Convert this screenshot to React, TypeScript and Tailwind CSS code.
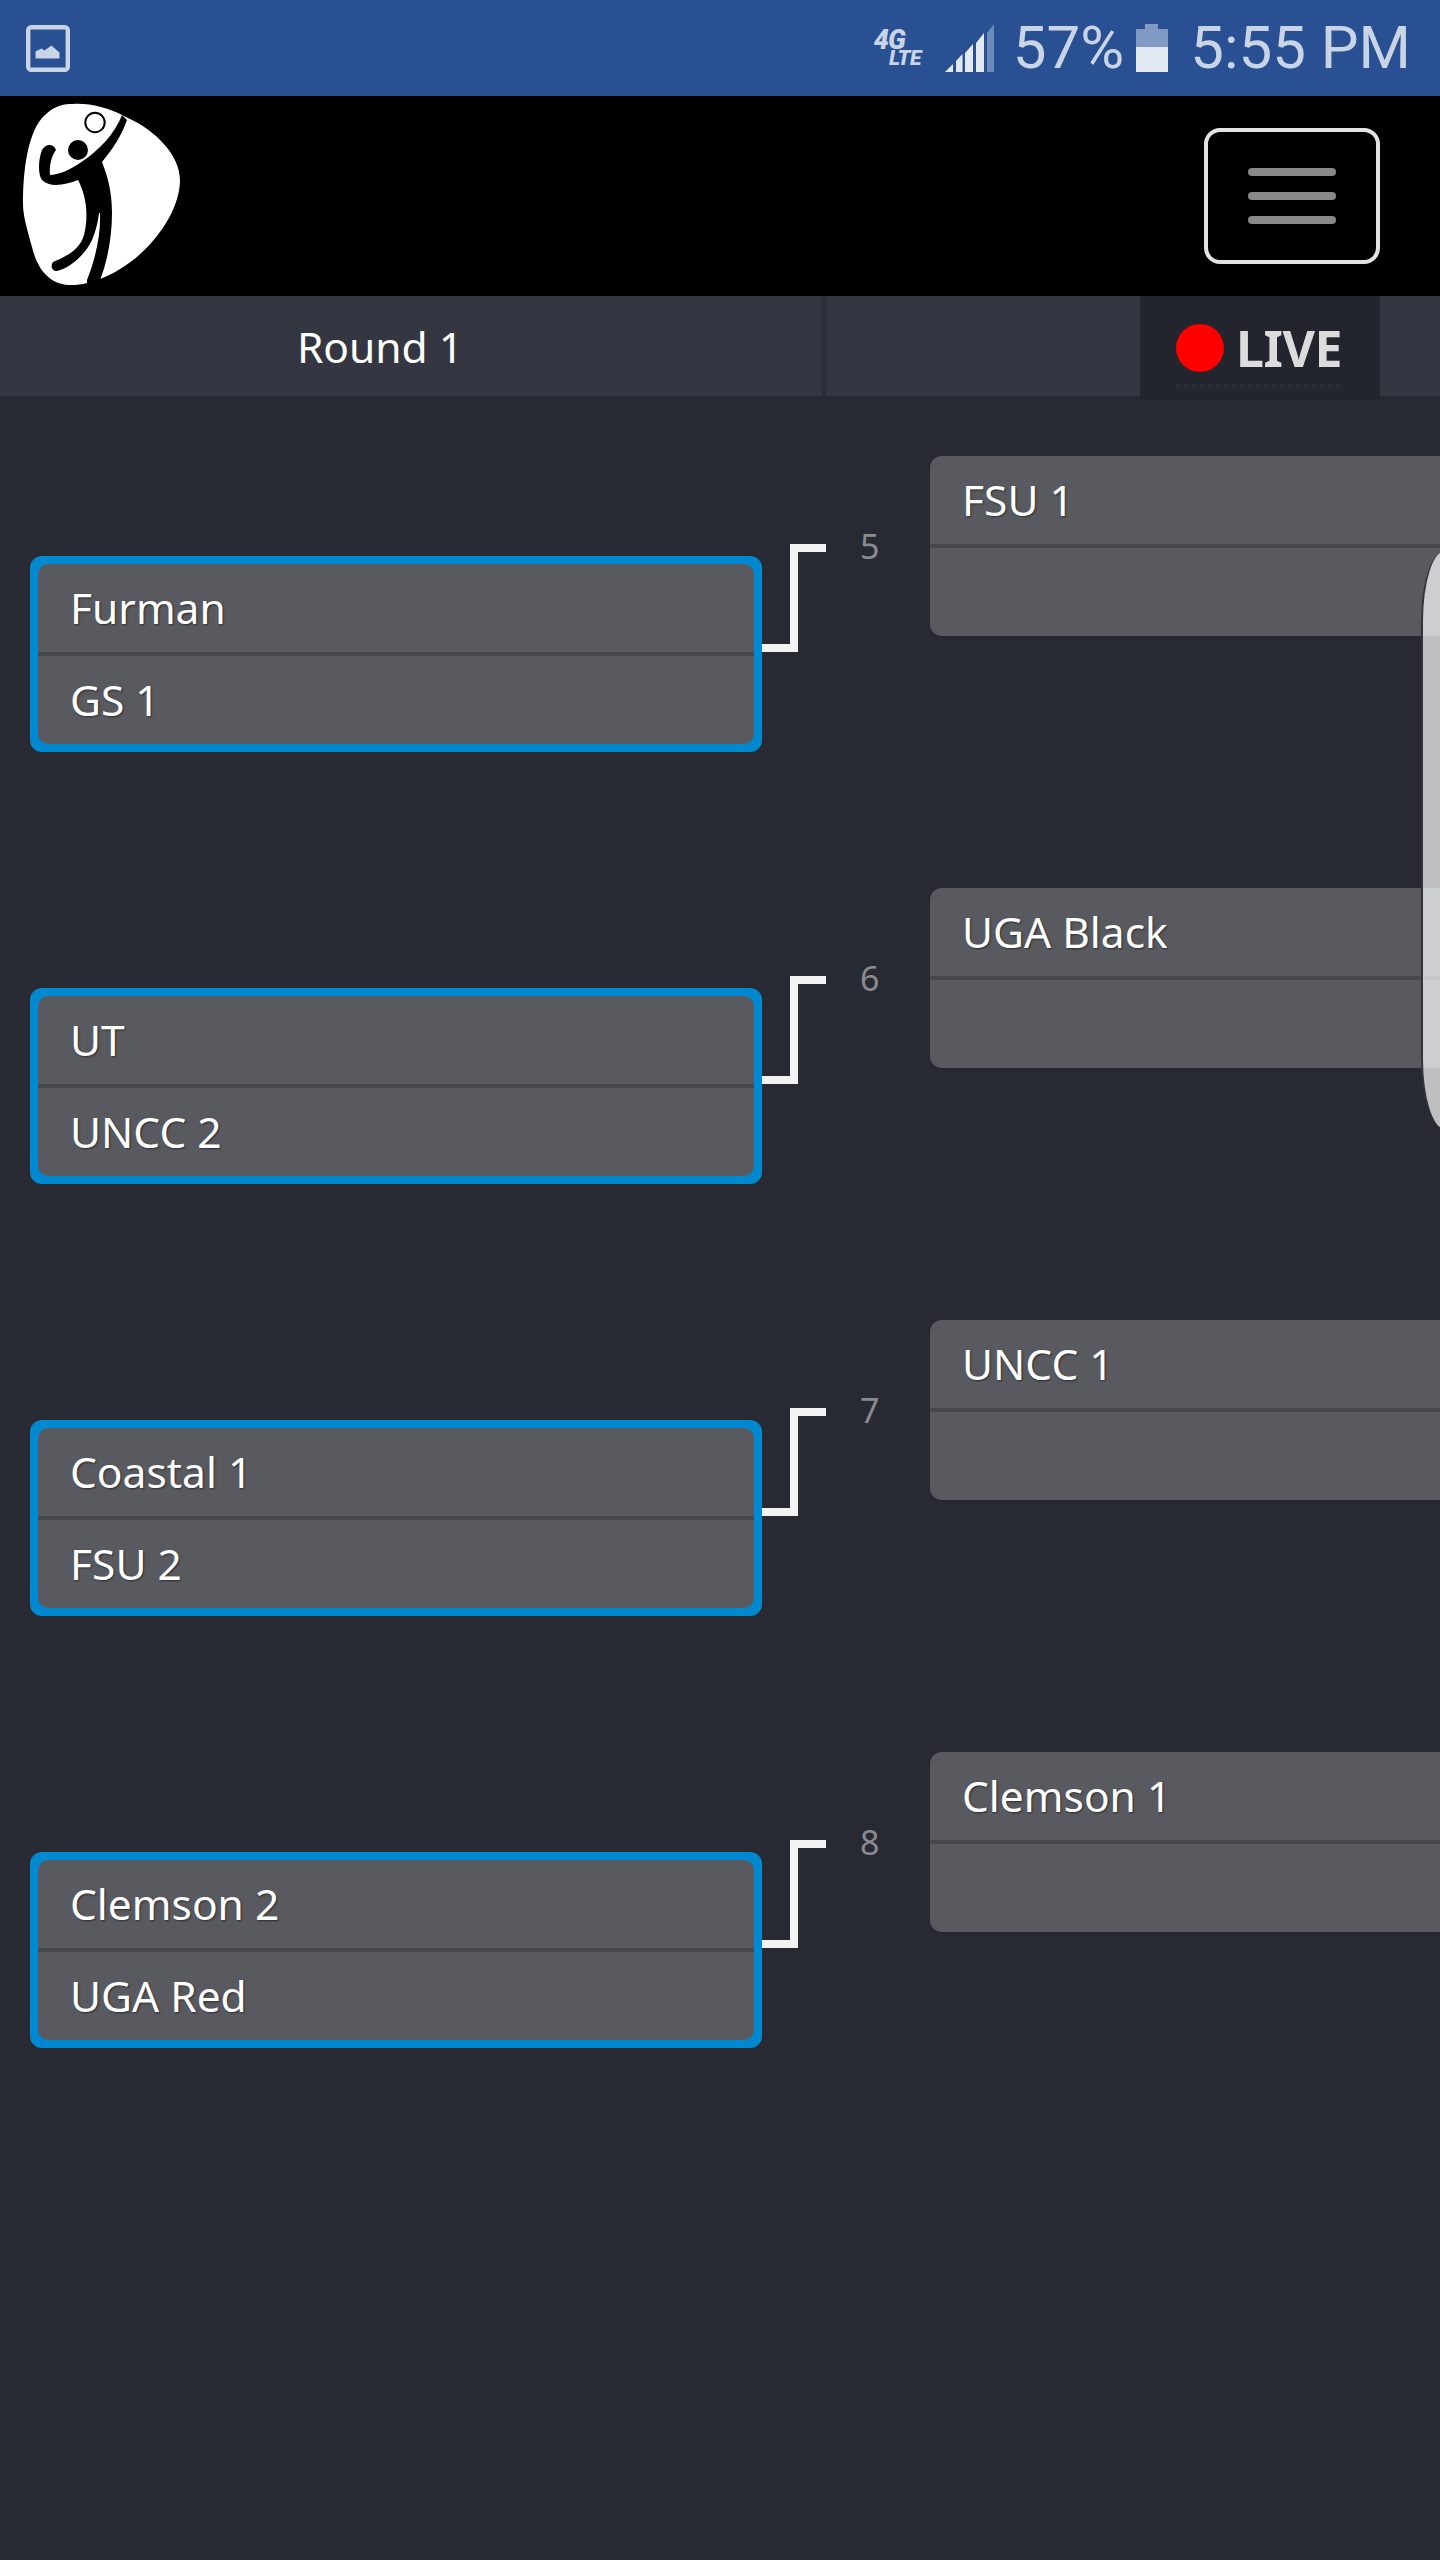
const teams = [
  { n: 5, top: "FSU 1", a: "Furman", b: "GS 1" },
  { n: 6, top: "UGA Black", a: "UT", b: "UNCC 2" },
  { n: 7, top: "UNCC 1", a: "Coastal 1", b: "FSU 2" },
  { n: 8, top: "Clemson 1", a: "Clemson 2", b: "UGA Red" },
];

function Slot({ name }: { name?: string }) {
  return (
    <div className="flex h-[88px] items-center pb-[1px] pl-[32px] text-[42.5px] text-white [text-shadow:1px_1px_2px_rgba(0,0,0,0.5)]">
      {name}
    </div>
  );
}

function Logo() {
  return (
    <svg viewBox="0 96 190 200" className="h-[200px] w-[190px]">
      <path
        d="M73 104 C90 103 108 108 122 115 L128 118 C155 130 180 155 180 180 C180 215 145 262 100 279 L87 283 C60 290 40 280 32 247 C26 225 23 215 23 203 C23 170 28 130 45 115 C55 105 65 104 73 104 Z"
        fill="#fff"
      />
      <path
        d="M122 115 C115 133 100 150 80 163 C70 170 58 175 50 175 C49 165 52 155 56 150 C54 144 46 143 42 150 C38 160 38 175 42 180 C50 188 65 185 78 180 C86 195 89 215 84 235 C80 250 65 257 53 262 C50 266 52 271 57 271 C70 268 85 255 92 240 C97 228 98 220 99 213 L100 213 C101 235 95 260 87 280 L87 285 L100 280 C108 260 112 235 112 213 C112 190 107 175 102 162 C112 150 122 135 127 120 Z"
        fill="#000"
      />
      <circle cx="95" cy="122.5" r="9.7" fill="#fff" stroke="#000" strokeWidth="2" />
      <circle cx="78" cy="150" r="10" fill="#000" />
    </svg>
  );
}

function StatusBar() {
  return (
    <div className="flex h-[96px] items-center justify-between pl-[26px] pr-[29px] bg-[#285092] font-['Roboto',sans-serif] text-[#c9d4e6]">
      <svg viewBox="0 0 44 47" className="h-[47px] w-[44px]">
        <rect x="2.2" y="2.2" width="39.6" height="42.6" rx="3" fill="none" stroke="#c9d4e6" strokeWidth="4.4" />
        <path d="M9.5 33.5 V26.5 L15.5 23.5 L18.5 25.5 L25.5 20.5 L33.5 27.5 V33.5 Z" fill="#c9d4e6" />
      </svg>
      <div className="flex items-center">
        <div className="relative mr-[24px] h-[38px] w-[47px] font-black italic leading-none">
          <span className="absolute left-0 top-[-2px] text-[27px] tracking-[-1px]">4G</span>
          <span className="absolute bottom-[-2px] right-0 text-[21px] tracking-[-0.5px]">LTE</span>
        </div>
        <svg viewBox="0 0 49 48" className="mr-[19px] h-[48px] w-[49px]">
          <path d="M0 48 L8 40 V48 Z" fill="#e3e9f2" />
          <path d="M11 37 L17.5 30 V48 H11 Z" fill="#e3e9f2" />
          <path d="M20 29 L28 20 V48 H20 Z" fill="#e3e9f2" />
          <path d="M31 19 L39 9 V48 H31 Z" fill="#e3e9f2" />
          <path d="M42 9 L49 0 V48 H42 Z" fill="#6b8bbb" />
        </svg>
        <span className="text-[60px] leading-none">57%</span>
        <svg viewBox="0 0 32 48" className="ml-[12px] mr-[22px] h-[48px] w-[32px]">
          <path d="M9 0 H22 V5 H32 V23 H0 V5 H9 Z" fill="#809ac3" />
          <rect y="23" width="32" height="25" fill="#e3e9f2" />
        </svg>
        <span className="text-[60px] leading-none">5:55 PM</span>
      </div>
    </div>
  );
}

function Header() {
  return (
    <div className="flex h-[200px] items-center justify-between bg-black pr-[60px]">
      <Logo />
      <div className="flex h-[136px] w-[176px] flex-col items-center justify-center gap-4 rounded-[16px] border-[4px] border-[#e3e3e3]">
        <div className="h-2 w-[88px] rounded-[4px] bg-[#888888]" />
        <div className="h-2 w-[88px] rounded-[4px] bg-[#888888]" />
        <div className="h-2 w-[88px] rounded-[4px] bg-[#888888]" />
      </div>
    </div>
  );
}

function TabBar() {
  return (
    <div className="flex h-[100px] items-start bg-[#343741]">
      <div className="flex h-[100px] w-[826px] items-center justify-center border-r-[4px] border-[#2b2d38] pr-[62px] pt-[1px] text-[42.5px] text-white">
        Round 1
      </div>
      <div className="w-[314px]" />
      <div className="flex h-[104px] w-[240px] flex-col items-start bg-[#22252d] pl-[36px] pt-[28px]">
        <div className="flex items-center gap-3">
          <div className="h-12 w-12 rounded-full bg-[#ff0000]" />
          <span className="text-[50px] font-bold leading-[48px] tracking-[-0.5px] text-[#dcdcdc]">LIVE</span>
        </div>
        <div className="mt-3 h-1 w-[168px] bg-[repeating-linear-gradient(90deg,#2b2e36_0_4px,transparent_4px_8px)]" />
      </div>
    </div>
  );
}

function Match({ t }: { t: (typeof teams)[number] }) {
  return (
    <div className="flex h-[296px] items-start">
      <div className="ml-[30px] mt-[100px] w-[732px] rounded-[12px] bg-[#0089d0] p-2">
        <div className="rounded-[10px] bg-[#595a60]">
          <Slot name={t.a} />
          <div className="h-1 bg-[#47484e]" />
          <Slot name={t.b} />
        </div>
      </div>
      <svg viewBox="0 0 64 108" className="mt-[88px] h-[108px] w-[64px]">
        <path d="M0 104 H32 V4 H64" fill="none" stroke="#f2f2f2" strokeWidth="8" />
      </svg>
      <div className="ml-[34px] mt-[68px] w-[20px] text-[34px] leading-[44px] text-[#8a8b8f]">{t.n}</div>
      <div className="ml-[50px] h-[180px] flex-1 rounded-l-[12px] bg-[#595a60]">
        <Slot name={t.top} />
        <div className="h-1 bg-[#47484e]" />
      </div>
    </div>
  );
}

export default function App() {
  return (
    <div className="relative h-[2560px] w-[1440px] overflow-hidden bg-[#282a33] font-['Noto_Sans',sans-serif]">
      <StatusBar />
      <Header />
      <TabBar />
      <div className="flex flex-col gap-[136px] pt-[60px]">
        {teams.map((t) => (
          <Match key={t.n} t={t} />
        ))}
      </div>
      {/* overlay handle on the right edge */}
      <div className="absolute left-[1421px] top-[551px] h-[578px] w-[60px] rounded-[24px/70px] border-l-2 border-[#33343c] bg-white/70" />
    </div>
  );
}
